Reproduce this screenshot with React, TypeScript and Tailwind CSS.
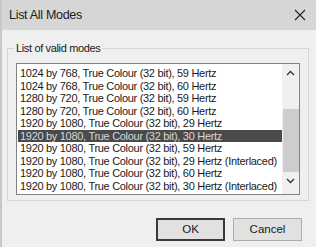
import React, { useState } from 'react';

const modes = [
  '1024 by 768, True Colour (32 bit), 59 Hertz',
  '1024 by 768, True Colour (32 bit), 60 Hertz',
  '1280 by 720, True Colour (32 bit), 59 Hertz',
  '1280 by 720, True Colour (32 bit), 60 Hertz',
  '1920 by 1080, True Colour (32 bit), 29 Hertz',
  '1920 by 1080, True Colour (32 bit), 30 Hertz',
  '1920 by 1080, True Colour (32 bit), 59 Hertz',
  '1920 by 1080, True Colour (32 bit), 29 Hertz (Interlaced)',
  '1920 by 1080, True Colour (32 bit), 60 Hertz',
  '1920 by 1080, True Colour (32 bit), 30 Hertz (Interlaced)',
];

export default function App() {
  const [selected, setSelected] = useState(5);

  return (
    <div
      className="w-[316px] h-[247px] flex flex-col bg-[#efefef] text-[#1a1a1a] overflow-hidden border-l-2 border-[#c8c8c8]"
      style={{ fontFamily: '"Liberation Sans", Arial, sans-serif' }}
    >
      {/* title bar */}
      <div className="h-[30px] shrink-0 flex items-center justify-between bg-[#d6d6d6] pl-[7px] pr-[10px]">
        <span className="text-[12.5px] tracking-[-0.3px] text-[#202020]">List All Modes</span>
        <svg width="12" height="12" viewBox="0 0 12 12" className="text-[#222]">
          <path d="M1 1 L11 11 M11 1 L1 11" stroke="currentColor" strokeWidth="1.1" />
        </svg>
      </div>

      {/* body */}
      <div className="flex-1 flex flex-col pt-[12px] pl-[5px] pr-[7px]">
        <div className="relative border border-[#d5d5d5] h-[153px] mt-[6px] px-[8px] pt-[14px]">
          <span className="absolute left-[6px] -top-[9px] px-[2px] bg-[#efefef] text-[11px] tracking-[-0.35px] leading-[16px]">
            List of valid modes
          </span>
          <div className="flex h-[132px] border border-[#828282] bg-white">
            <div className="flex-1 min-w-0 overflow-hidden flex flex-col pt-[3px] pl-[1px]">
              {modes.map((m, i) => (
                <div
                  key={m}
                  onClick={() => setSelected(i)}
                  className={`h-[12.55px] leading-[12.55px] pl-[2px] text-[11px] tracking-[-0.3px] whitespace-nowrap ${
                    i === selected ? 'bg-[#4a4a4a] text-[#d8d8d8]' : 'text-[#1a1a1a]'
                  }`}
                >
                  {m}
                </div>
              ))}
            </div>
            <div className="w-[17px] shrink-0 flex flex-col items-center bg-[#f0f0f0]">
              <svg width="9" height="6" viewBox="0 0 9 6" className="mt-[6px]">
                <path d="M1 5 L4.5 1.5 L8 5" stroke="#333" strokeWidth="1.3" fill="none" />
              </svg>
              <div className="mt-[33px] w-[16px] h-[63px] bg-[#cdcdcd]" />
              <svg width="9" height="6" viewBox="0 0 9 6" className="mt-[6px]">
                <path d="M1 1 L4.5 4.5 L8 1" stroke="#333" strokeWidth="1.3" fill="none" />
              </svg>
            </div>
          </div>
        </div>

        <div className="flex justify-end gap-[8px] mt-[17px] pr-[7px]">
          <button className="w-[69px] h-[23px] bg-[#e1e1e1] border-2 border-[#3a3a3a] text-[11.5px]">
            OK
          </button>
          <button className="w-[69px] h-[23px] bg-[#e1e1e1] border border-[#adadad] text-[11.5px]">
            Cancel
          </button>
        </div>
      </div>
    </div>
  );
}
